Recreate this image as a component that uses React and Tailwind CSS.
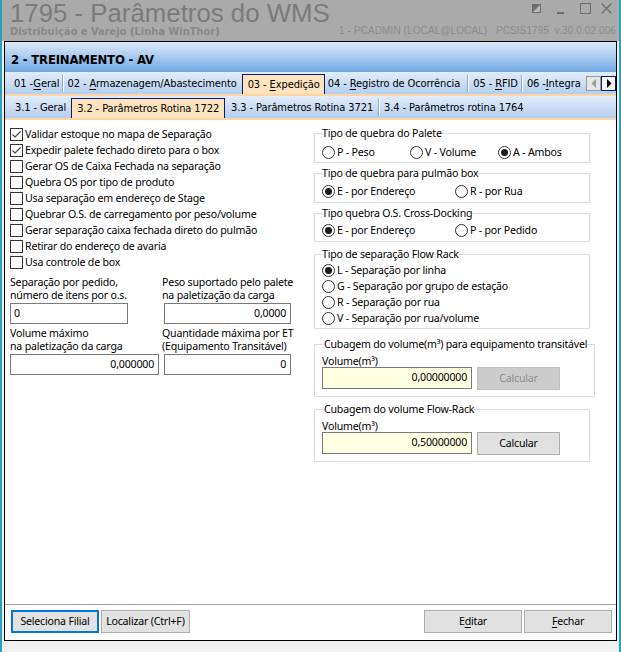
import React from "react";

const SEGOE = "font-['Noto_Sans',sans-serif]";
const TAHOMA = "font-['DejaVu_Sans_Condensed','DejaVu_Sans',sans-serif]";
const ARIAL = "font-['Liberation_Sans',Arial,sans-serif]";

function Check({ checked }) {
  return (
    <span className="w-[13px] h-[13px] border border-[#333333] bg-white shrink-0 flex items-center justify-center">
      {checked && (
        <svg width="11" height="11" viewBox="0 0 11 11">
          <path d="M1.5 5.5 L4 8 L9.5 2.5" fill="none" stroke="#3c3c3c" strokeWidth="1.1" />
        </svg>
      )}
    </span>
  );
}

function Radio({ checked, label, className = "" }) {
  return (
    <div className={`flex items-center h-[16px] ${className}`}>
      <span className="w-[13px] h-[13px] rounded-full border border-[#333333] bg-white shrink-0 flex items-center justify-center">
        {checked && <span className="w-[7px] h-[7px] rounded-full bg-[#1a1a1a]" />}
      </span>
      <span className="ml-[2px] leading-[13px] text-black whitespace-nowrap">{label}</span>
    </div>
  );
}

function Group({ title, className = "", legendClass = "", children }) {
  return (
    <fieldset className={`border border-[#dcdcdc] px-[7px] w-[276px] ${className}`}>
      <legend className={`px-0 leading-[13px] text-black whitespace-nowrap ${legendClass}`}>{title}</legend>
      {children}
    </fieldset>
  );
}

function Input({ value, right, className = "", yellow }) {
  return (
    <div
      className={`h-[21px] border border-[#7a7a7a] ${yellow ? "bg-[#ffffe1]" : "bg-white"} flex items-center text-black ${
        right ? "justify-end pr-[4px]" : "pl-[3px]"
      } ${className}`}
    >
      {value}
    </div>
  );
}

function Sep() {
  return <span className="w-[1px] h-[17px] bg-[#8aa7d6] border-r border-white box-content shrink-0" />;
}

function TabText({ children, className = "" }) {
  return (
    <span className={`text-[11px] leading-[13px] tracking-[-0.1px] text-black whitespace-nowrap ${className}`}>
      {children}
    </span>
  );
}

function ActiveTab({ children, className = "" }) {
  return (
    <div
      className={`self-end h-[20px] bg-[#fde3bd] border-x border-t border-[#0a1a6e] flex items-center ${className}`}
    >
      <TabText>{children}</TabText>
    </div>
  );
}

function U({ children }) {
  return <span className="underline underline-offset-[2px]">{children}</span>;
}

function Button({ children, className = "", disabled, focused }) {
  return (
    <div
      className={`h-[23px] flex items-center justify-center ${
        focused ? "border-2 border-[#0078d7]" : "border border-[#adadad]"
      } ${disabled ? "bg-[#cccccc] text-[#8d8d8d] border-[#bfbfbf]" : "bg-[#e1e1e1] text-black"} ${className}`}
    >
      {children}
    </div>
  );
}

export default function App() {
  const checks = [
    ["Validar estoque no mapa de Separação", true],
    ["Expedir palete fechado direto para o box", true],
    ["Gerar OS de Caixa Fechada na separação", false],
    ["Quebra OS por tipo de produto", false],
    ["Usa separação em endereço de Stage", false],
    ["Quebrar O.S. de carregamento por peso/volume", false],
    ["Gerar separação caixa fechada direto do pulmão", false],
    ["Retirar do endereço de avaria", false],
    ["Usa controle de box", false],
  ];

  return (
    <div
      className={`w-[621px] h-[652px] bg-[#f0f0f0] border-x-2 border-[#2aa3b8] overflow-hidden flex flex-col text-[10.6px] tracking-[-0.2px] ${SEGOE}`}
    >
      {/* window title bar */}
      <div className="h-[41px] bg-[#aaaaaa] flex justify-between shrink-0 tracking-normal">
        <div className="pl-[8px] pt-[2px]">
          <div className={`text-[25.8px] leading-[23px] text-[#7b7b7b] whitespace-nowrap ${ARIAL}`}>
            1795 - Parâmetros do WMS
          </div>
          <div className={`mt-[1px] text-[11px] leading-[11px] font-bold text-[#888888] whitespace-nowrap ${TAHOMA}`}>
            Distribuição e Varejo (Linha WinThor)
          </div>
        </div>
        <div className={`flex flex-col items-end pr-[3px] ${ARIAL}`}>
          <div className="flex items-start h-[25px] pt-[3px] pr-[4px]">
            <svg width="9" height="9" viewBox="0 0 9 9" className="mr-[16px] mt-[1px]">
              <rect x="0.5" y="0.5" width="8" height="8" fill="#b8b8b8" stroke="#6d6d6d" />
              <polygon points="0,0 9,0 0,9" fill="#6d6d6d" />
            </svg>
            <svg width="7" height="12" viewBox="0 0 7 12" className="mr-[16px]">
              <rect x="0" y="9" width="7" height="2" fill="#6d6d6d" />
            </svg>
            <svg width="11" height="11" viewBox="0 0 11 11" className="mr-[10px]">
              <rect x="0.5" y="0.5" width="10" height="10" fill="none" stroke="#6d6d6d" />
            </svg>
            <svg width="11" height="11" viewBox="0 0 11 11">
              <path d="M0.5 0.5 L10.5 10.5 M10.5 0.5 L0.5 10.5" stroke="#6d6d6d" strokeWidth="1.3" />
            </svg>
          </div>
          <div className="text-[10px] leading-[12px] text-[#8c8c8c] whitespace-nowrap tracking-[0.1px]">
            1 - PCADMIN (LOCAL@LOCAL)&nbsp;&nbsp;&nbsp;PCSIS1795&nbsp;&nbsp;v.30.0.02.006
          </div>
        </div>
      </div>

      {/* main panel */}
      <div className="ml-[2px] w-[613px] h-[600px] border border-black flex flex-col bg-white shrink-0">
        <div
          className={`h-[30px] shrink-0 bg-gradient-to-b from-[#dbe9f8] via-[#a8caef] to-[#70a8e2] flex items-end pl-[6px] pb-[5px] ${TAHOMA}`}
        >
          <span className="text-[13px] leading-[15px] font-bold text-black tracking-[-0.2px]">2 - TREINAMENTO - AV</span>
        </div>

        {/* first tab row */}
        <div className={`h-[22px] shrink-0 bg-gradient-to-b from-[#e2ecf9] to-[#b5cfef] flex items-center ${TAHOMA}`}>
          <TabText className="ml-[9px] mr-[3px]">
            01 -<U>G</U>eral
          </TabText>
          <Sep />
          <TabText className="ml-[3px] mr-[5px]">
            02 - <U>A</U>rmazenagem/Abastecimento
          </TabText>
          <ActiveTab className="pl-[5px] pr-[4px]">
            03 - <U>E</U>xpedição
          </ActiveTab>
          <TabText className="ml-[3px] mr-[7px]">
            04 - <U>R</U>egistro de Ocorrência
          </TabText>
          <Sep />
          <TabText className="ml-[4px] mr-[3px]">
            05 - <U>R</U>FID
          </TabText>
          <Sep />
          <TabText className="ml-[4px]">
            06 -<U>I</U>ntegra
          </TabText>
          <div className="ml-auto flex">
            <div className="w-[15px] h-[15px] border border-[#9a9a9a] bg-[#e6e6e6] flex items-center justify-center">
              <svg width="6" height="9" viewBox="0 0 6 9">
                <polygon points="5,0 5,9 0.5,4.5" fill="#9a9a9a" />
              </svg>
            </div>
            <div className="w-[15px] h-[15px] border border-[#0a1a6e] bg-[#f4f4f4] flex items-center justify-center">
              <svg width="6" height="9" viewBox="0 0 6 9">
                <polygon points="1,0 1,9 5.5,4.5" fill="#000000" />
              </svg>
            </div>
          </div>
        </div>
        <div className="h-[2px] shrink-0 bg-[#fcd5a2]" />

        {/* second tab row */}
        <div className={`h-[22px] shrink-0 bg-gradient-to-b from-[#e2ecf9] to-[#b5cfef] flex items-center ${TAHOMA}`}>
          <TabText className="ml-[10px] mr-[5px]">3.1 - Geral</TabText>
          <ActiveTab className="px-[5px]">3.2 - Parâmetros Rotina 1722</ActiveTab>
          <TabText className="ml-[6px] mr-[5px]">3.3 - Parâmetros Rotina 3721</TabText>
          <Sep />
          <TabText className="ml-[4px]">3.4 - Parâmetros rotina 1764</TabText>
        </div>
        <div className="h-[2px] shrink-0 bg-[#fcd5a2]" />

        {/* tab content */}
        <div className="flex-1 flex pl-[5px]">
          <div className="w-[304px] shrink-0">
            <div className="pt-[6px] flex flex-col">
              {checks.map(([label, on]) => (
                <div key={label} className="h-[16px] flex items-center">
                  <Check checked={on} />
                  <span className="ml-[2px] leading-[13px] text-black whitespace-nowrap">{label}</span>
                </div>
              ))}
            </div>

            <div className="mt-[6px] grid grid-cols-[152px_1fr] leading-[13px] text-black">
              <div>
                <div>Separação por pedido,</div>
                <div>número de itens por o.s.</div>
                <Input value="0" className="w-[118px] mt-[1px]" />
              </div>
              <div>
                <div>Peso suportado pelo palete</div>
                <div>na paletização da carga</div>
                <Input value="0,0000" right className="ml-[2px] w-[127px] mt-[1px]" />
              </div>
              <div className="mt-[3px]">
                <div>Volume máximo</div>
                <div>na paletização da carga</div>
                <Input value="0,000000" right className="w-[149px] mt-[1px]" />
              </div>
              <div className="mt-[3px]">
                <div>Quantidade máxima por ET</div>
                <div>(Equipamento Transitável)</div>
                <Input value="0" right className="ml-[2px] w-[127px] mt-[1px]" />
              </div>
            </div>
          </div>

          <div className="flex flex-col pt-[7px]">
            <Group title="Tipo de quebra do Palete" className="pb-[2px]">
              <div className="flex mt-[4px]">
                <Radio label="P - Peso" className="w-[88px]" />
                <Radio label="V - Volume" className="w-[88px]" />
                <Radio label="A - Ambos" checked />
              </div>
            </Group>
            <Group title="Tipo de quebra para pulmão box" className="mt-[4px] pb-[3px]">
              <div className="flex mt-[3px]">
                <Radio label="E - por Endereço" checked className="w-[133px]" />
                <Radio label="R - por Rua" />
              </div>
            </Group>
            <Group title="Tipo quebra O.S. Cross-Docking" className="mt-[4px] pb-[3px]">
              <div className="flex mt-[2px]">
                <Radio label="E - por Endereço" checked className="w-[133px]" />
                <Radio label="P - por Pedido" />
              </div>
            </Group>
            <Group title="Tipo de separação Flow Rack" className="mt-[6px] pb-[2px]">
              <div className="flex flex-col mt-[1px]">
                <Radio label="L - Separação por linha" checked />
                <Radio label="G - Separação por grupo de estação" />
                <Radio label="R - Separação por rua" />
                <Radio label="V - Separação por rua/volume" />
              </div>
            </Group>
            <Group
              title="Cubagem do volume(m³) para equipamento transitável"
              className="mt-[9px] pb-[6px] px-[5px]"
              legendClass="ml-[2px]"
            >
              <div className="mt-[4px] leading-[12px]">Volume(m³)</div>
              <div className="flex">
                <Input value="0,00000000" right yellow className="w-[150px] h-[22px]" />
                <Button disabled className="ml-[5px] w-[83px] h-[22px]">
                  Calcular
                </Button>
              </div>
            </Group>
            <Group title="Cubagem do volume Flow-Rack" className="mt-[6px] pb-[6px] px-[5px]" legendClass="ml-[2px]">
              <div className="mt-[4px] leading-[12px]">Volume(m³)</div>
              <div className="flex">
                <Input value="0,50000000" right yellow className="w-[150px] h-[22px]" />
                <Button className="ml-[5px] w-[83px] h-[22px]">Calcular</Button>
              </div>
            </Group>
          </div>
        </div>

        {/* footer buttons */}
        <div className="h-[36px] shrink-0 border-t border-[#a0a0a0] flex items-start pt-[5px] pl-[6px] pr-[4px]">
          <Button focused className="w-[88px]">
            Seleciona Filial
          </Button>
          <Button className="ml-[2px] w-[89px]">Localizar (Ctrl+F)</Button>
          <Button className="ml-auto w-[98px]">
            E<U>d</U>itar
          </Button>
          <Button className="ml-[2px] w-[88px]">
            <U>F</U>echar
          </Button>
        </div>
      </div>
    </div>
  );
}
